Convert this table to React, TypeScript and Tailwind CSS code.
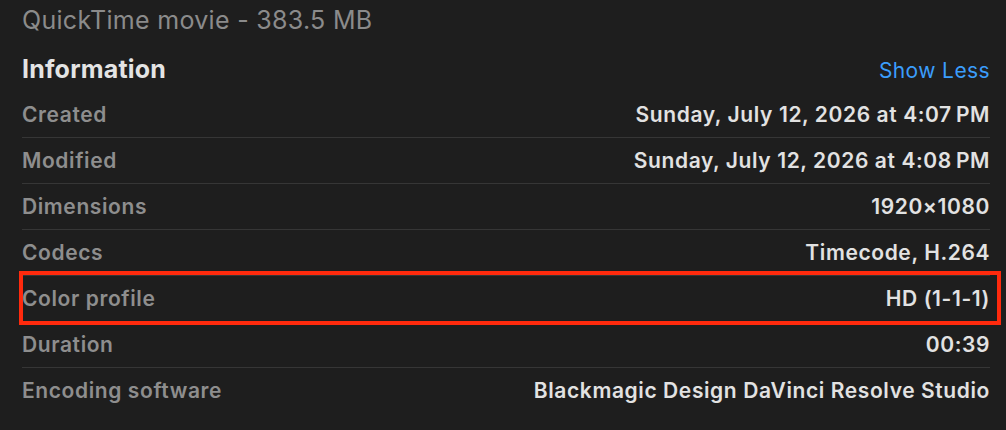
import React from 'react';

const rows: { label: string; value: string; marked?: boolean }[] = [
  { label: 'Created', value: 'Sunday, July 12, 2026 at 4:07\u202FPM' },
  { label: 'Modified', value: 'Sunday, July 12, 2026 at 4:08\u202FPM' },
  { label: 'Dimensions', value: '1920×1080' },
  { label: 'Codecs', value: 'Timecode, H.264' },
  { label: 'Color profile', value: 'HD (1-1-1)', marked: true },
  { label: 'Duration', value: '00:39' },
  { label: 'Encoding software', value: 'Blackmagic Design DaVinci Resolve Studio' },
];

export default function App() {
  return (
    <div
      className="h-[430px] w-[1006px] overflow-hidden bg-[#1e1e1e] pl-[22px] pr-[16px]"
      style={{ fontFamily: 'Inter, "Noto Sans", sans-serif' }}
    >
      <div className="pt-[5px] text-[25px] leading-[30px] tracking-[0.3px] text-[#8b8b8b]">
        QuickTime movie - 383.5 MB
      </div>

      <div className="mt-[19px] flex items-baseline justify-between">
        <span className="text-[25px] font-bold leading-[30px] tracking-[0.2px] text-[#e4e4e4]">Information</span>
        <button type="button" className="text-[21px] leading-[30px] tracking-[0.4px] text-[#3b9dfb]">
          Show Less
        </button>
      </div>

      <div className="mt-[6px]">
        {rows.map((r, i) => (
          <div
            key={r.label}
            className={`relative flex h-[46px] items-center justify-between text-[21px] font-semibold tracking-[0.6px] ${
              i < rows.length - 1 ? 'border-b border-[#363636]' : ''
            }`}
          >
            <span className="text-[#8e8e8e]">{r.label}</span>
            <span className="text-[#e2e2e2]">{r.value}</span>
            {r.marked && (
              <div className="pointer-events-none absolute -top-[5px] -bottom-[4px] -left-[3px] -right-[11px] border-[4px] border-[#ff2a0d]" />
            )}
          </div>
        ))}
      </div>
    </div>
  );
}
